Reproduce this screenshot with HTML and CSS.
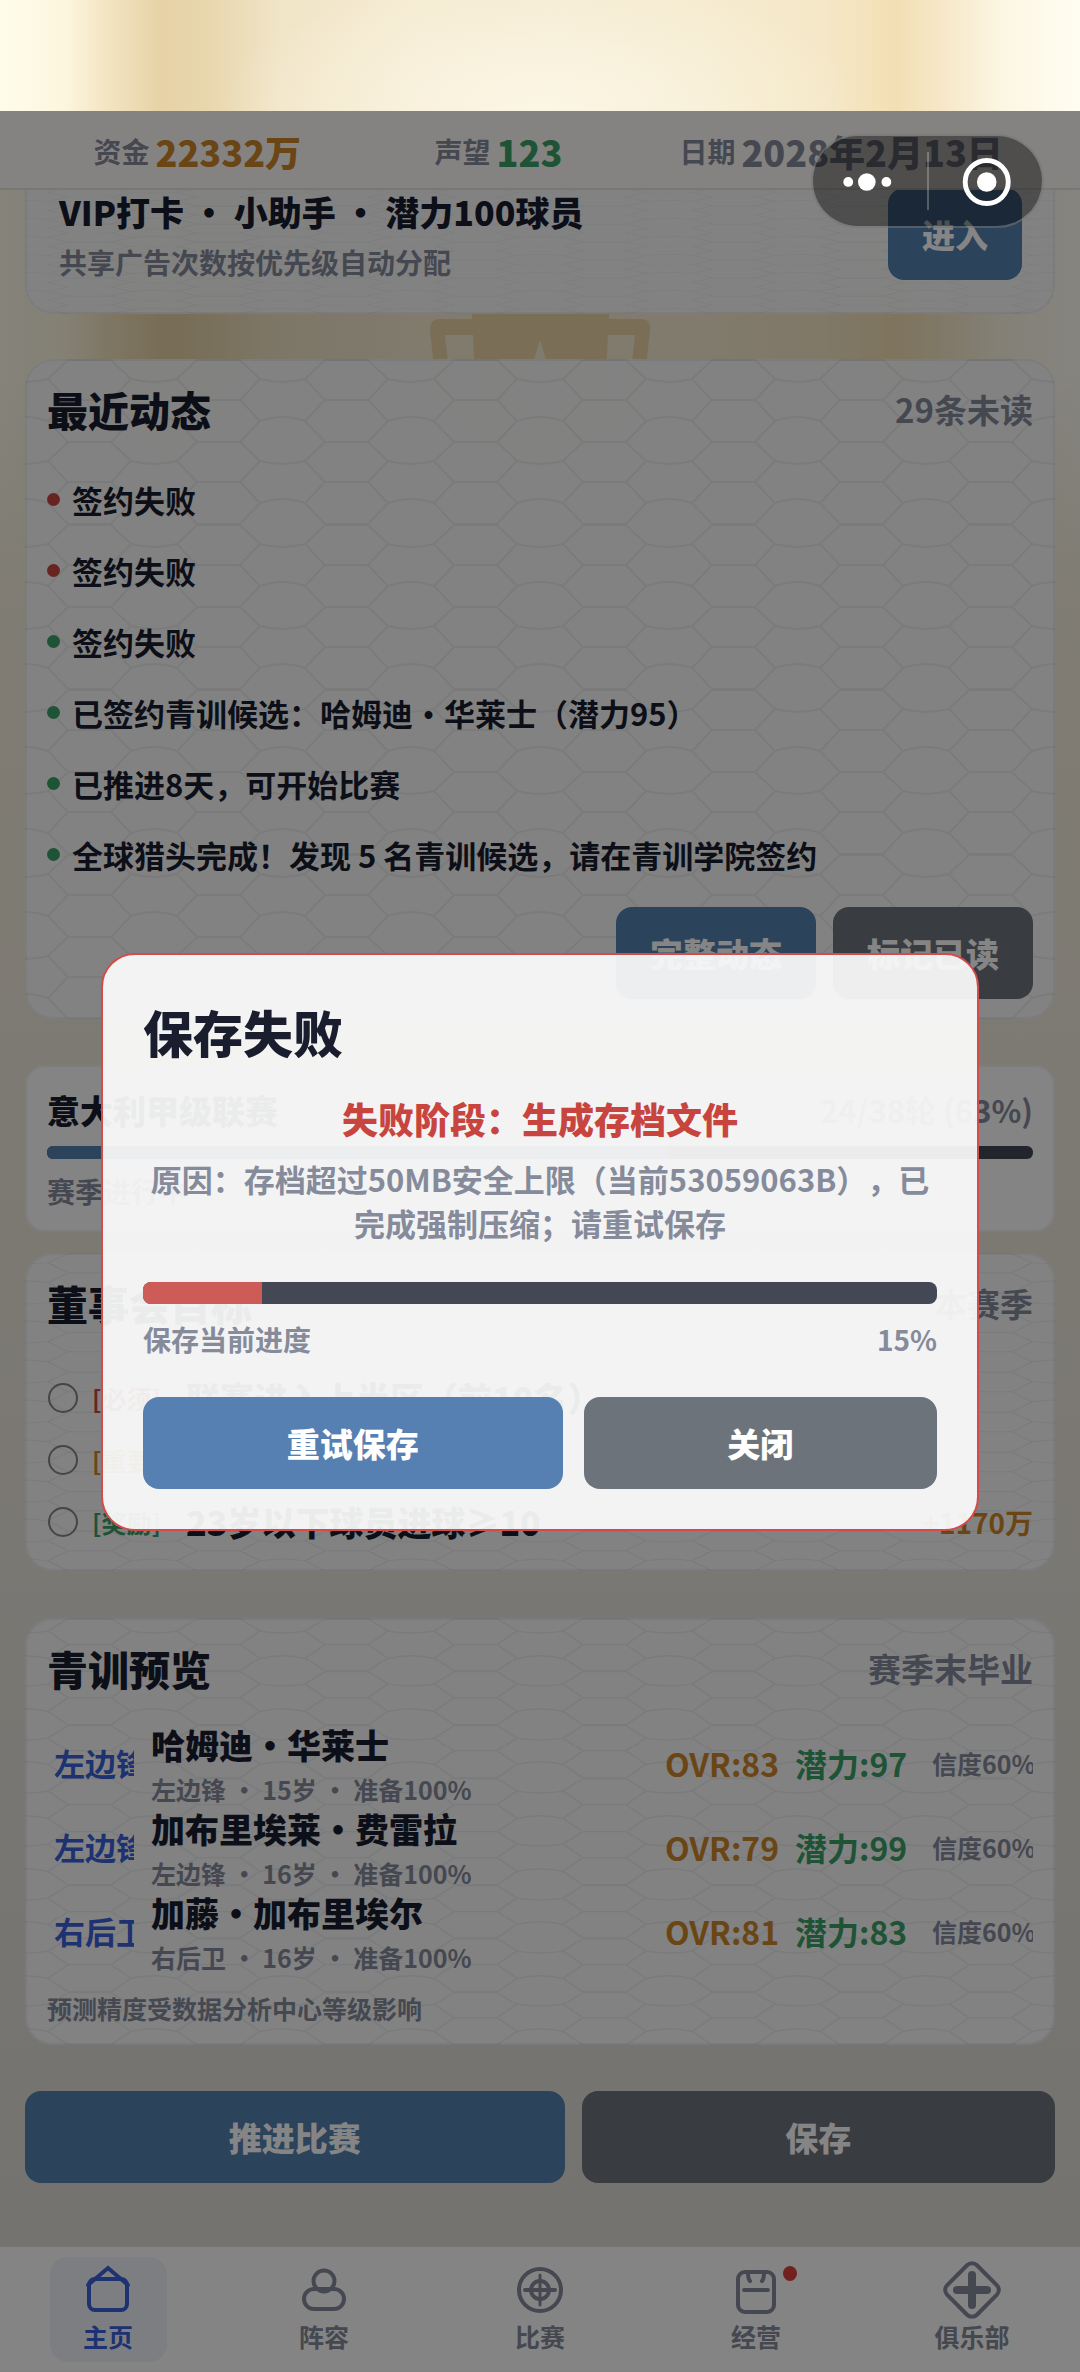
FILE: index.html
```html
<!DOCTYPE html>
<html lang="zh-CN">
<head>
<meta charset="utf-8">
<meta name="viewport" content="width=device-width, initial-scale=1">
<title>主页</title>
<link rel="stylesheet" href="styles.css">
</head>
<body>
<div class="backdrop" aria-hidden="true">
  <svg class="trophy" viewBox="0 0 220 200">
    <path fill="#ebd3a7" fill-rule="evenodd" d="M42 0H179V6H212Q221 6 220 18L214 70Q208 110 170 118L150 150H70L50 118Q12 110 6 70L0 18Q0 6 9 6H42ZM15 22L20 68Q26 94 46 98L43 22ZM178 22L174 98Q194 94 200 68L205 22ZM110 27L98 66H66L92 88L82 120L110 100L138 120L128 88L154 66H122Z"/>
  </svg>
</div>

<div class="page">
  <div class="status-area"></div>

  <header class="topbar">
    <div class="stat"><span class="stat-label">资金</span><strong class="stat-value gold">22332万</strong></div>
    <div class="stat"><span class="stat-label">声望</span><strong class="stat-value green">123</strong></div>
    <div class="stat"><span class="stat-label">日期</span><strong class="stat-value muted">2028年2月13日</strong></div>
  </header>

  <main class="content">
    <section class="card patterned vip">
      <div class="vip-text">
        <h2 class="vip-title">VIP打卡 · 小助手 · 潜力100球员</h2>
        <p class="vip-sub">共享广告次数按优先级自动分配</p>
      </div>
      <button class="btn primary" type="button">进入</button>
    </section>

    <section class="card patterned news">
      <div class="card-head"><h2 class="card-title">最近动态</h2><span class="card-side">29条未读</span></div>
      <ul class="news-list">
        <li class="news-item bad">签约失败</li>
        <li class="news-item bad">签约失败</li>
        <li class="news-item">签约失败</li>
        <li class="news-item">已签约青训候选：哈姆迪・华莱士（潜力95）</li>
        <li class="news-item">已推进8天，可开始比赛</li>
        <li class="news-item">全球猎头完成！发现 5 名青训候选，请在青训学院签约</li>
      </ul>
      <div class="news-actions">
        <button class="btn primary" type="button">完整动态</button>
        <button class="btn neutral" type="button">标记已读</button>
      </div>
    </section>

    <section class="card league">
      <div class="league-head"><h2 class="league-title">意大利甲级联赛</h2><span class="league-round">24/38轮 (63%)</span></div>
      <div class="meter" role="progressbar" aria-valuenow="63" aria-valuemin="0" aria-valuemax="100"><div class="meter-fill" style="width:63%"></div></div>
      <p class="league-state">赛季进行中</p>
    </section>

    <section class="card patterned board">
      <div class="card-head"><h2 class="card-title">董事会目标</h2><span class="card-side">本赛季</span></div>
      <div class="goal">
        <input class="goal-check" type="checkbox" id="goal-1">
        <label class="goal-label" for="goal-1"><span class="goal-tag red">[必须]</span><span class="goal-text">联赛进入上半区（前10名）</span></label>
      </div>
      <div class="goal">
        <input class="goal-check" type="checkbox" id="goal-2">
        <label class="goal-label" for="goal-2"><span class="goal-tag gold">[重要]</span></label>
      </div>
      <div class="goal">
        <input class="goal-check" type="checkbox" id="goal-3">
        <label class="goal-label" for="goal-3"><span class="goal-tag green">[奖励]</span><span class="goal-text">23岁以下球员进球≥10</span></label>
        <span class="goal-reward gold">+1170万</span>
      </div>
    </section>

    <section class="card patterned youth">
      <div class="card-head"><h2 class="card-title">青训预览</h2><span class="card-side">赛季末毕业</span></div>
      <div class="player">
        <span class="player-pos">左边锋</span>
        <div class="player-info"><strong class="player-name">哈姆迪・华莱士</strong><span class="player-meta">左边锋 · 15岁 · 准备100%</span></div>
        <span class="player-ovr">OVR:83</span><span class="player-pot">潜力:97</span><span class="player-trust">信度60%</span>
      </div>
      <div class="player">
        <span class="player-pos">左边锋</span>
        <div class="player-info"><strong class="player-name">加布里埃莱・费雷拉</strong><span class="player-meta">左边锋 · 16岁 · 准备100%</span></div>
        <span class="player-ovr">OVR:79</span><span class="player-pot">潜力:99</span><span class="player-trust">信度60%</span>
      </div>
      <div class="player">
        <span class="player-pos">右后卫</span>
        <div class="player-info"><strong class="player-name">加藤・加布里埃尔</strong><span class="player-meta">右后卫 · 16岁 · 准备100%</span></div>
        <span class="player-ovr">OVR:81</span><span class="player-pot">潜力:83</span><span class="player-trust">信度60%</span>
      </div>
      <p class="youth-note">预测精度受数据分析中心等级影响</p>
    </section>

    <div class="main-actions">
      <button class="btn primary" type="button">推进比赛</button>
      <button class="btn neutral" type="button">保存</button>
    </div>
  </main>

  <nav class="tabbar">
    <a class="tab active" href="#home">
      <svg class="tab-icon" viewBox="-30 -30 60 60"><path d="M-20-5L0-22L20-5"/><rect x="-19" y="-11" width="38" height="31" rx="6"/></svg>
      <span class="tab-label">主页</span>
    </a>
    <a class="tab" href="#squad">
      <svg class="tab-icon" viewBox="-30 -30 60 60"><circle cx="0" cy="-9" r="10.500"/><rect x="-20" y="-1" width="40" height="20" rx="10"/></svg>
      <span class="tab-label">阵容</span>
    </a>
    <a class="tab" href="#match">
      <svg class="tab-icon" viewBox="-30 -30 60 60"><circle r="21"/><circle r="9"/><path d="M0-15V15" stroke-width="3"/><path d="M-15 0H15"/></svg>
      <span class="tab-label">比赛</span>
    </a>
    <a class="tab" href="#business">
      <svg class="tab-icon" viewBox="-30 -30 60 60"><rect x="-18" y="-18" width="36" height="40" rx="7"/><path d="M-6-9Q-8-11-8-18H8Q8-11 6-9"/><path d="M-12 0H12"/></svg>
      <span class="tab-label">经营</span>
      <span class="tab-dot"></span>
    </a>
    <a class="tab" href="#club">
      <svg class="tab-icon" viewBox="-30 -30 60 60"><rect x="-21" y="-21" width="42" height="42" rx="7" transform="rotate(45)"/><path d="M0-15V15" stroke-width="8"/><path d="M-15 0H15" stroke-width="8"/></svg>
      <span class="tab-label">俱乐部</span>
    </a>
  </nav>
</div>

<div class="overlay">
  <div class="dialog" role="alertdialog" aria-labelledby="dialog-title">
    <h1 class="dialog-title" id="dialog-title">保存失败</h1>
    <p class="dialog-stage">失败阶段：生成存档文件</p>
    <p class="dialog-reason">原因：存档超过50MB安全上限（当前53059063B），已完成强制压缩；请重试保存</p>
    <div class="dialog-meter" role="progressbar" aria-valuenow="15" aria-valuemin="0" aria-valuemax="100"><div class="dialog-meter-fill" style="width:15%"></div></div>
    <div class="dialog-progress"><span>保存当前进度</span><span>15%</span></div>
    <div class="dialog-actions">
      <button class="btn primary" type="button">重试保存</button>
      <button class="btn neutral" type="button">关闭</button>
    </div>
  </div>
</div>

<div class="capsule">
  <button class="capsule-btn" type="button" aria-label="更多">
    <svg viewBox="0 0 116 90"><circle cx="36" cy="46" r="5"/><circle cx="55" cy="46" r="9"/><circle cx="75" cy="46" r="5"/></svg>
  </button>
  <span class="capsule-line"></span>
  <button class="capsule-btn" type="button" aria-label="关闭小程序">
    <svg viewBox="0 0 116 90"><circle class="ring" cx="59" cy="46" r="22"/><circle cx="59" cy="46" r="10"/></svg>
  </button>
</div>
</body>
</html>
```
FILE: styles.css
```css
* { box-sizing: border-box; }

:root {
  --ink: #1a1d2e;
  --muted: #858b9a;
  --gold: #cc872b;
  --green: #3c9f68;
  --red: #c8453f;
  --accent: #3a60d8;
  --primary: #5580b1;
  --neutral: #6d737b;
  --track: #444855;
}

body {
  position: relative;
  margin: 0;
  min-height: 100vh;
  background: linear-gradient(#f8f1de 0, #f3ecdc 800px, #ebe7dd 1500px, #dfddd7 2200px);
  color: var(--ink);
  font-family: "Noto Sans CJK SC", "Noto Sans", sans-serif;
  font-weight: 700;
  text-spacing-trim: space-all;
}

h1, h2, p, ul { margin: 0; padding: 0; font-weight: 700; }

.gold { color: var(--gold); }
.green { color: var(--green); }
.red { color: var(--red); }
.muted { color: var(--muted); }

/* golden spotlight behind the page */
.backdrop {
  position: absolute;
  inset: 0 0 auto 0;
  height: 620px;
  background:
    radial-gradient(320px 130px at 50% 105px, rgba(253, 248, 232, 0.8), transparent),
    linear-gradient(90deg, #fffceb 0%, #fdf6de 6%, #f3e4c1 10%, #e6d2a5 15%, #e8d6ad 19%, #f1e5c8 26%, #f5ebd2 38%, #f5ecd3 52%, #f5ebd0 65%, #f5e8c8 76%, #f3dfb4 83%, #f7e9cb 88%, #fcf7e4 93%, #fffdf2 100%);
  -webkit-mask-image: linear-gradient(#000 360px, transparent);
  mask-image: linear-gradient(#000 360px, transparent);
}
.trophy {
  position: absolute;
  top: 313px;
  left: calc(50% - 110px);
  width: 220px;
  height: 200px;
}

.page {
  position: relative;
  z-index: 0;
  display: flex;
  flex-direction: column;
  min-height: 100vh;
}
.status-area { height: 111px; }

.topbar {
  position: relative;
  z-index: 1;
  display: grid;
  grid-template-columns: 19fr 10fr 23fr;
  align-items: center;
  height: 79px;
  padding-top: 3px;
  background: #fefcf8;
  border-bottom: 2px solid #e6e5e3;
}
.stat { display: flex; justify-content: center; align-items: center; gap: 6px; white-space: nowrap; }
.stat-label { color: var(--muted); font-size: 28px; line-height: 40px; }
.stat-value { font-size: 36px; line-height: 48px; font-weight: 900; }

.content { flex: 1; display: flex; flex-direction: column; padding: 0 25px 64px; }

.card {
  padding: 22px 22px 20px;
  background-color: rgba(250, 250, 251, 0.96);
  border-radius: 28px;
  box-shadow: inset 0 0 0 2px rgba(120, 130, 150, 0.1);
}
/* honeycomb, eight tiles across and down whatever the card's size */
.patterned {
  background-image: url("data:image/svg+xml,%3Csvg xmlns='http://www.w3.org/2000/svg' viewBox='0 0 129 83' preserveAspectRatio='none'%3E%3Cpath fill='none' stroke='%23707888' stroke-opacity='.11' stroke-width='2' d='M43 1H86L106 20Q118 23 129 23M86 41L106 20M43 41H86L106 62Q118 58 129 58M106 62L86 83H43L23 62Q11 58 0 58M23 62L43 41L23 20Q11 23 0 23M23 20L43 1'/%3E%3C/svg%3E");
  background-size: 12.5% 12.5%;
}

.card-head { display: flex; justify-content: space-between; align-items: center; height: 56px; }
.card-title { font-size: 41px; line-height: 56px; font-weight: 900; }
.card-side { color: var(--muted); font-size: 33px; line-height: 48px; }

.btn {
  height: 92px;
  padding: 0 34px;
  border: 0;
  border-radius: 16px;
  color: #fff;
  font: 900 33px/48px "Noto Sans CJK SC", "Noto Sans", sans-serif;
  white-space: nowrap;
}
.primary { background: var(--primary); }
.neutral { background: var(--neutral); }

/* scrolled partly under the top bar */
.vip {
  display: flex;
  justify-content: space-between;
  align-items: center;
  margin-top: -20px;
  padding: 12px 33px 28px 34px;
  border-radius: 0 0 28px 28px;
}
.vip-text { padding-top: 4px; }
.vip-title { font-size: 34px; line-height: 52px; font-weight: 900; }
.vip-sub { color: var(--muted); font-size: 28px; line-height: 48px; }

.news { margin-top: 45px; }
.news-list { margin-top: 27px; list-style: none; }
.news-item { display: flex; align-items: center; gap: 12px; font-size: 31px; line-height: 71px; }
.news-item::before { content: ""; width: 13px; height: 13px; border-radius: 50%; background: var(--green); }
.news-item.bad::before { background: var(--red); }
.news-actions { display: flex; justify-content: flex-end; gap: 17px; margin-top: 17px; }

.league { margin-top: 46px; padding: 23px 22px 21px; border-radius: 20px; background-color: #fdfdfd; }
.league-head { display: flex; justify-content: space-between; align-items: center; }
.league-title { font-size: 33px; line-height: 44px; font-weight: 900; }
.league-round { color: var(--muted); font-size: 31px; line-height: 44px; }
.meter { height: 13px; margin-top: 14px; border-radius: 6px; background: var(--track); overflow: hidden; }
.meter-fill { height: 100%; background: var(--primary); }
.league-state { margin-top: 12px; color: var(--muted); font-size: 28px; line-height: 40px; }

.board { margin-top: 21px; padding-bottom: 18px; }
.board .card-head { margin-bottom: 36px; }
.goal { display: flex; align-items: center; height: 62px; }
.goal-check {
  appearance: none;
  width: 30px;
  height: 30px;
  margin: 0 14px 0 1px;
  border: 2px solid #858585;
  border-radius: 50%;
}
.goal-label { display: flex; align-items: center; }
.goal-tag { width: 94px; font-size: 25px; line-height: 36px; }
.goal-text { font-size: 34px; line-height: 48px; font-weight: 900; }
.goal-reward { margin-left: auto; font-size: 28px; line-height: 40px; }

.youth { margin-top: 47px; padding-bottom: 19px; }
.youth .card-head { margin-bottom: 25px; }
.player { display: flex; align-items: center; gap: 17px; height: 84px; white-space: nowrap; }
.player-pos { width: 87px; padding-left: 7px; overflow: hidden; color: var(--accent); font-size: 31px; line-height: 44px; }
.player-info { flex: 1; display: flex; flex-direction: column; gap: 4px; }
.player-name { font-size: 34px; line-height: 48px; font-weight: 900; }
.player-meta { color: var(--muted); font-size: 25px; line-height: 32px; }
.player-ovr { width: 113px; color: var(--gold); font-size: 32px; line-height: 44px; }
.player-pot { width: 120px; color: var(--green); font-size: 32px; line-height: 44px; }
.player-trust { width: 101px; overflow: hidden; color: var(--muted); font-size: 25px; line-height: 36px; }
.youth-note { margin-top: 17px; color: var(--muted); font-size: 25px; line-height: 36px; }

.main-actions { display: flex; gap: 17px; margin-top: 46px; }
.main-actions .btn, .dialog-actions .btn { flex: 1 1 auto; }

.tabbar {
  display: grid;
  grid-template-columns: repeat(5, 1fr);
  justify-items: center;
  padding: 10px 0;
  background: #fdfdfd;
}
.tab {
  position: relative;
  display: flex;
  flex-direction: column;
  align-items: center;
  width: 117px;
  height: 105px;
  padding-top: 3px;
  border-radius: 18px;
  color: #858b9a;
  text-decoration: none;
}
.active { background: #eff1fa; color: var(--accent); }
.tab-icon { width: 60px; height: 60px; fill: none; stroke: currentColor; stroke-width: 4; stroke-linecap: round; }
.tab-label { font-size: 25px; line-height: 32px; }
.tab-dot { position: absolute; top: 9px; right: 18px; width: 14px; height: 15px; border-radius: 50%; background: #d8403a; }

.overlay {
  position: absolute;
  inset: 111px 0 0 0;
  display: flex;
  align-items: center;
  justify-content: center;
  padding: 0 101px;
  background: rgba(0, 0, 0, 0.48);
}
.dialog {
  width: 100%;
  padding: 44px 40px 40px;
  border: 2px solid #d14c4b;
  border-radius: 34px;
  background: rgba(252, 252, 252, 0.93);
}
.dialog-title { font-size: 50px; line-height: 64px; font-weight: 900; }
.dialog-stage { margin-top: 30px; color: var(--red); font-size: 36px; line-height: 50px; text-align: center; font-weight: 900; }
.dialog-reason { margin-top: 14px; color: var(--muted); font-size: 31px; line-height: 44px; text-align: center; }
.dialog-meter { height: 22px; margin-top: 37px; border-radius: 8px; background: var(--track); overflow: hidden; }
.dialog-meter-fill { height: 100%; background: #cd5b57; }
.dialog-progress { display: flex; justify-content: space-between; margin-top: 15px; color: var(--muted); font-size: 28px; line-height: 40px; }
.dialog-actions { display: flex; gap: 21px; margin-top: 38px; }

.capsule {
  position: absolute;
  top: 134px;
  right: 36px;
  display: flex;
  align-items: center;
  width: 233px;
  height: 94px;
  border: 2px solid rgba(255, 255, 255, 0.25);
  border-radius: 47px;
  background: rgba(0, 0, 0, 0.4);
}
.capsule-btn { flex: 1; height: 90px; padding: 0; border: 0; background: none; }
.capsule-btn svg { display: block; width: 100%; height: 100%; fill: #fff; }
.capsule-btn .ring { fill: none; stroke: #fff; stroke-width: 5; }
.capsule-line { width: 2px; height: 58px; background: rgba(255, 255, 255, 0.25); }
```
